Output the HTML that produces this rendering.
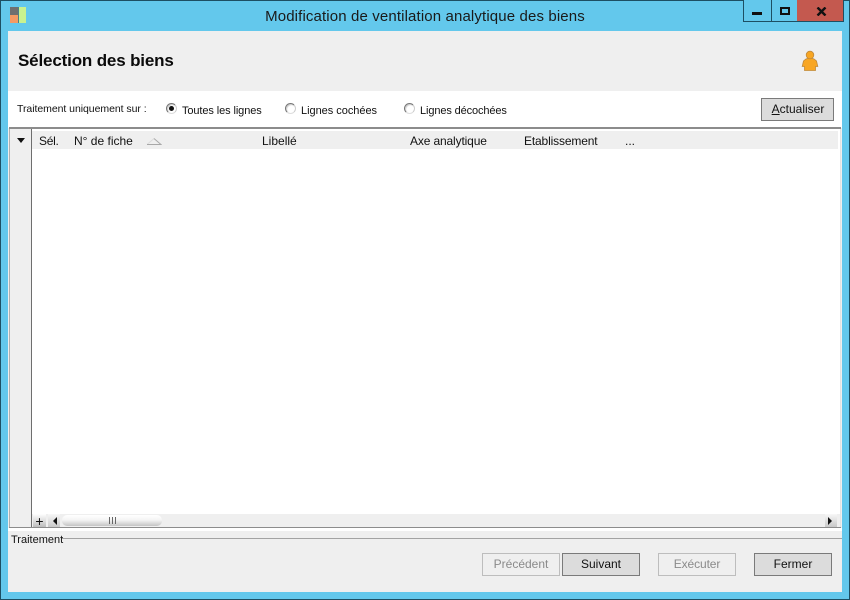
<!DOCTYPE html>
<html><head><meta charset="utf-8"><style>
html,body{margin:0;padding:0}
body{width:850px;height:600px;position:relative;overflow:hidden;background:#63c8ec;font-family:"Liberation Sans",sans-serif;color:#111;font-size:12px}
div,span{position:absolute;box-sizing:border-box;white-space:nowrap}
.btn{height:23px;border:1px solid #7a7a7a;background:#dcdcdc;text-align:center;line-height:21px;font-size:12px;color:#111}
.dis{border:1px solid #bdbdbd;background:#efefef;color:#8a8a8a}
.r{width:11px;height:11px;border-radius:50%;border:1px solid;border-color:#777 #ccc #ddd #777;background:#fff;box-shadow:inset 1px 1px 1px #ccc}
.t{line-height:14px}
.o{font-size:11px}
</style></head><body>
<div style="left:0;top:0;width:850px;height:600px;border:1px solid #1d4f63"></div>
<div style="left:10px;top:7px;width:8px;height:8px;background:#6f6f6f"></div>
<div style="left:10px;top:15px;width:8px;height:8px;background:#f59a63"></div>
<div style="left:18px;top:7px;width:1px;height:16px;background:#4d7f86"></div>
<div style="left:19px;top:7px;width:7px;height:16px;background:#c9f28f"></div>
<div style="left:0;top:8px;width:850px;text-align:center;font-size:15px;line-height:18px;color:#1a1a1a;letter-spacing:.13px">Modification de ventilation analytique des biens</div>
<div style="left:743px;top:0;width:101px;height:22px;border:1px solid #1d4f63;border-top:0;background:#63c8ec"></div>
<div style="left:771px;top:0;width:1px;height:21px;background:#1d4f63"></div>
<div style="left:797px;top:0;width:46px;height:21px;background:#c4594f"></div>
<div style="left:752px;top:12px;width:10px;height:3px;background:#111"></div>
<div style="left:780px;top:7px;width:10px;height:8px;border:2px solid #111"></div>
<svg style="position:absolute;left:816px;top:7px" width="11" height="9"><path d="M1.500 .5L9.500 8.500M9.500 .5L1.500 8.500" stroke="#111" stroke-width="2.400"/></svg>

<div style="left:8px;top:31px;width:834px;height:561px;background:#efefef"></div>
<div style="left:18px;top:51px;font-size:17px;font-weight:bold;line-height:20px;color:#0a0a0a;letter-spacing:-.16px">Sélection des biens</div>
<svg style="position:absolute;left:801px;top:50px" width="18" height="22"><path d="M5 9Q9 7 13 9L15.500 11L16.800 16.500H14.500V20.500H3.500V16.500H1.200L2.500 11Z" fill="#f8a623" stroke="#c08a3c" stroke-width=".8"/><circle cx="9" cy="5" r="3.800" fill="#f8a623" stroke="#c08a3c" stroke-width=".8"/></svg>

<div style="left:8px;top:91px;width:834px;height:37px;background:#fff"></div>
<div class="t" style="left:17px;top:102px;font-size:10.500px;letter-spacing:-.05px">Traitement uniquement sur :</div>
<div class="r" style="left:166px;top:103px"></div><div style="left:169px;top:106px;width:5px;height:5px;border-radius:50%;background:#111"></div>
<div class="t o" style="left:182px;top:104px;letter-spacing:-.1px">Toutes les lignes</div>
<div class="r" style="left:285px;top:103px"></div>
<div class="t o" style="left:301px;top:104px;letter-spacing:-.03px">Lignes cochées</div>
<div class="r" style="left:404px;top:103px"></div>
<div class="t o" style="left:420px;top:104px;letter-spacing:-.12px">Lignes décochées</div>
<div class="btn" style="left:761px;top:98px;width:73px;padding-left:1px"><u>A</u>ctualiser</div>

<div style="left:9px;top:127px;width:832px;height:2px;background:#8c8c8c"></div>
<div style="left:9px;top:129px;width:832px;height:399px;background:#fff"></div>
<div style="left:9px;top:129px;width:1px;height:399px;background:#b0b0b0"></div>
<div style="left:10px;top:129px;width:21px;height:399px;background:#efefef"></div>
<div style="left:31px;top:129px;width:1px;height:399px;background:#6e6e6e"></div>
<div style="left:840px;top:129px;width:1px;height:399px;background:#e3e3e3"></div>
<div style="left:17px;top:138px;width:0;height:0;border-left:4.500px solid transparent;border-right:4.500px solid transparent;border-top:5px solid #111"></div>
<div style="left:32px;top:131px;width:806px;height:18px;background:#efefef"></div>
<div class="t" style="left:39px;top:134px;letter-spacing:-.3px">Sél.</div>
<div class="t" style="left:74px;top:134px">N° de fiche</div>
<svg style="position:absolute;left:146px;top:138px" width="16" height="8"><path d="M1 6.500L8 .5" fill="none" stroke="#dcdcdc"/><path d="M1 6.500H15L8 .5" fill="none" stroke="#a8a8a8"/></svg>
<div class="t" style="left:262px;top:134px">Libellé</div>
<div class="t" style="left:410px;top:134px;letter-spacing:-.14px">Axe analytique</div>
<div class="t" style="left:524px;top:134px;letter-spacing:-.15px">Etablissement</div>
<div class="t" style="left:625px;top:134px">...</div>

<div style="left:32px;top:514px;width:808px;height:13px;background:#efefef"></div>
<div style="left:33px;top:514px;width:13px;height:13px;background:linear-gradient(#fff,#bdbdbd);text-align:center;line-height:14px;font-size:14px;color:#111">+</div>
<div style="left:48px;top:514px;width:12px;height:13px;background:linear-gradient(#f8f8f8,#c8c8c8)"></div>
<div style="left:53px;top:517px;width:0;height:0;border-top:4px solid transparent;border-bottom:4px solid transparent;border-right:4px solid #111"></div>
<div style="left:62px;top:515px;width:100px;height:11px;border-radius:5px;background:linear-gradient(#fff 0,#f4f4f4 45%,#c4c4c4 100%)"></div>
<div style="left:109px;top:517px;width:7px;height:7px;border-left:1px solid #666;border-right:1px solid #666"></div>
<div style="left:112px;top:517px;width:1px;height:7px;background:#666"></div>
<div style="left:825px;top:514px;width:12px;height:13px;background:linear-gradient(#f8f8f8,#c8c8c8)"></div>
<div style="left:828px;top:517px;width:0;height:0;border-top:4px solid transparent;border-bottom:4px solid transparent;border-left:4px solid #111"></div>
<div style="left:9px;top:527px;width:832px;height:1px;background:#8c8c8c"></div>
<div style="left:8px;top:528px;width:834px;height:3px;background:#fff"></div>

<div style="left:62px;top:538px;width:780px;height:1px;background:#a3a3a3"></div>
<div class="t" style="left:11px;top:533px;font-size:11px">Traitement</div>
<div class="btn dis" style="left:482px;top:553px;width:78px">Précédent</div>
<div class="btn" style="left:562px;top:553px;width:78px">Suivant</div>
<div class="btn dis" style="left:658px;top:553px;width:78px;letter-spacing:-.1px">Exécuter</div>
<div class="btn" style="left:754px;top:553px;width:78px">Fermer</div>
</body></html>
